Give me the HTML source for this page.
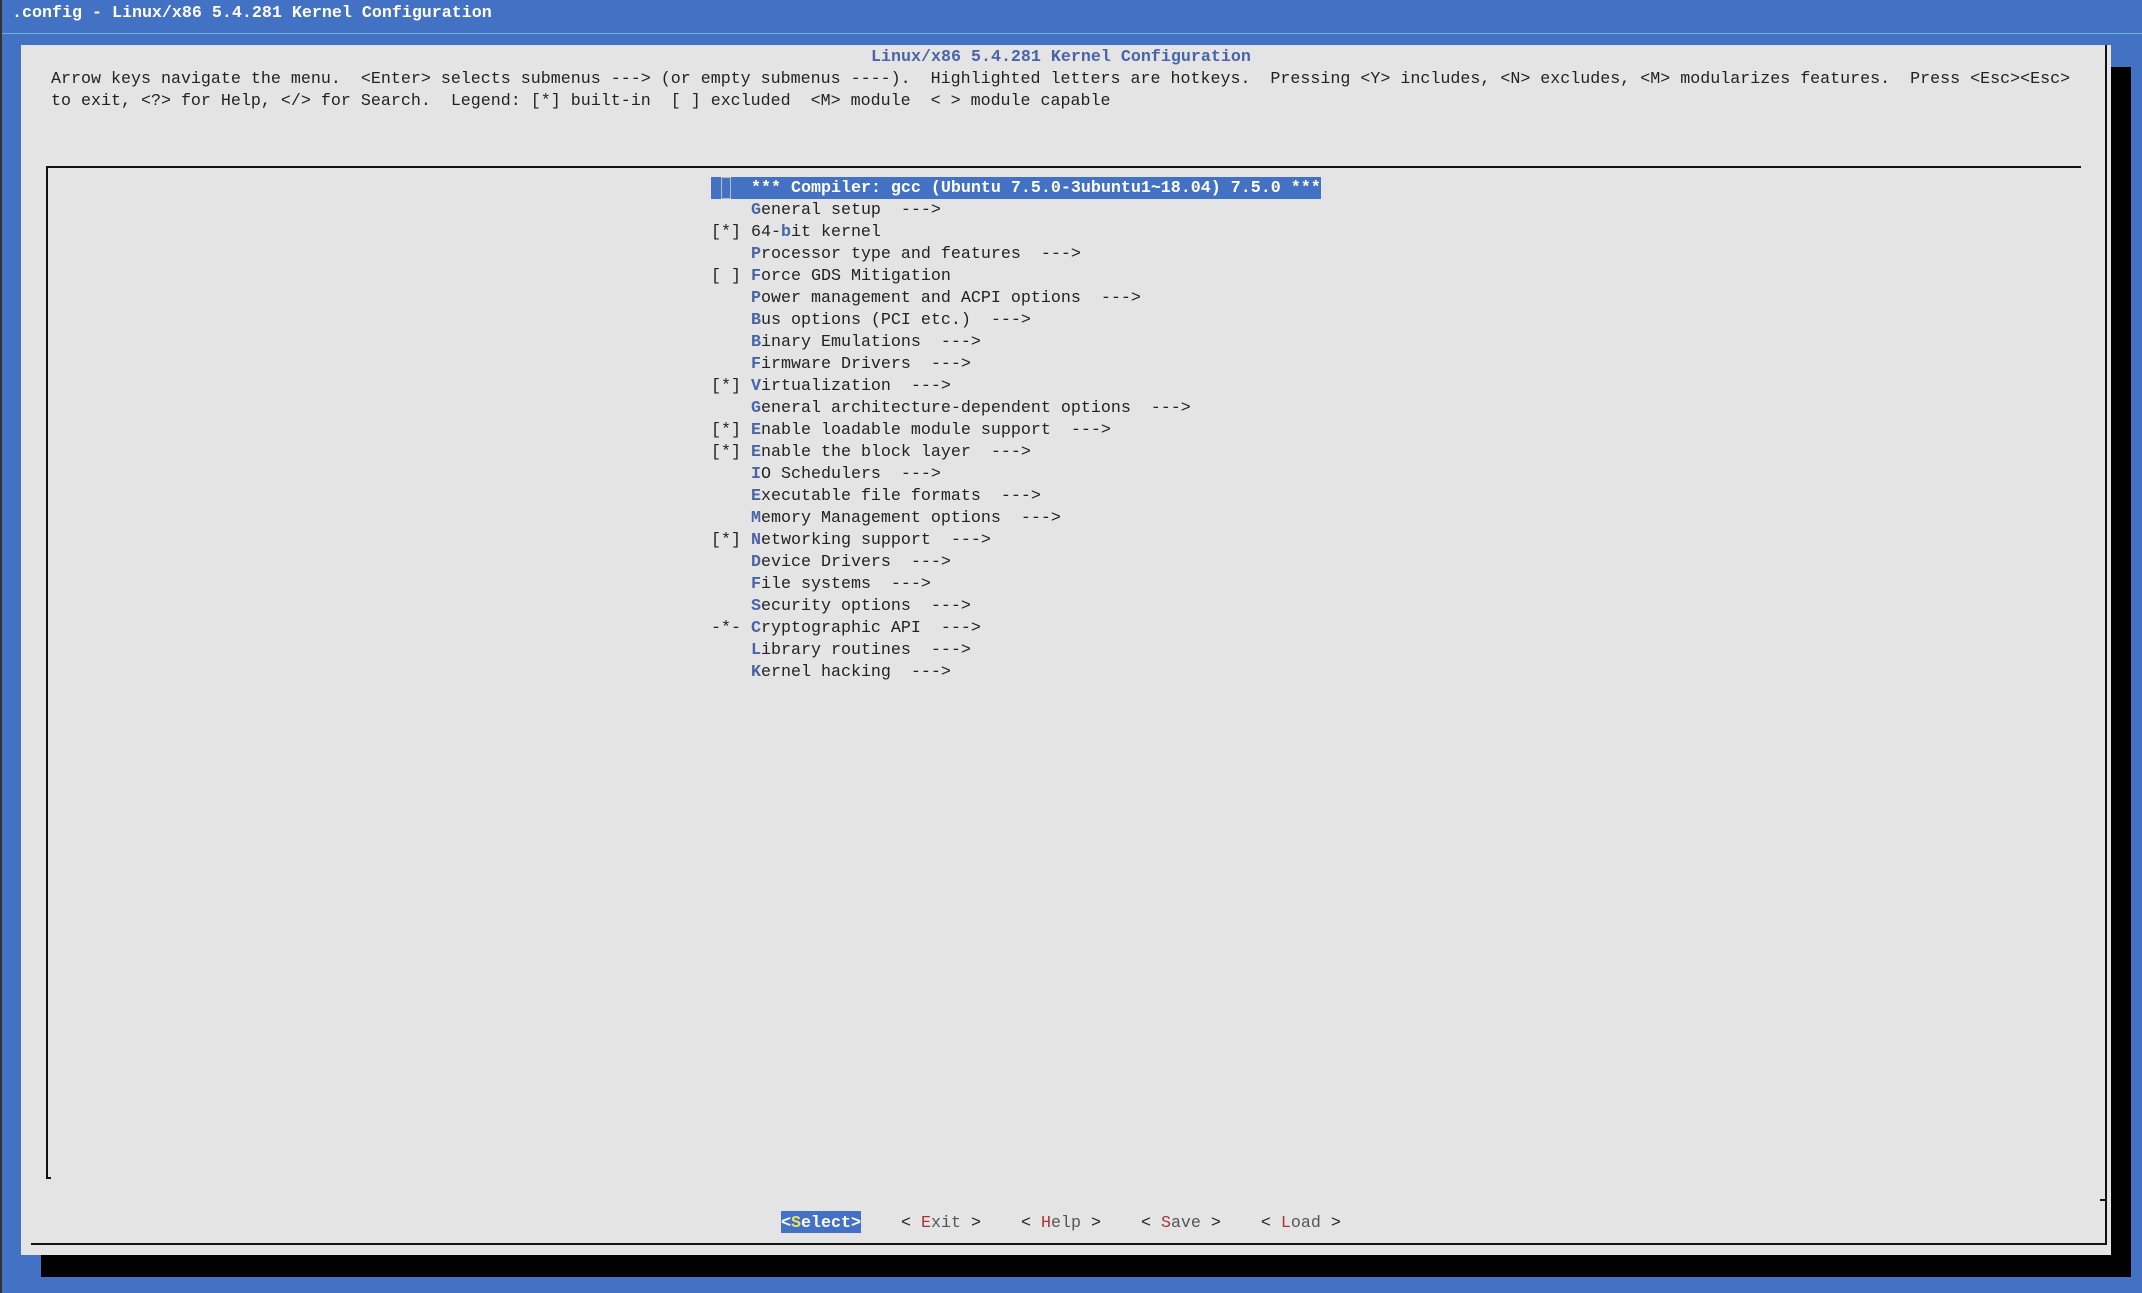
<!DOCTYPE html>
<html><head><meta charset="utf-8"><style>
*{margin:0;padding:0;box-sizing:border-box}
body{width:2142px;height:1293px;background:#4371c4;position:relative;overflow:hidden;font-family:"Liberation Mono",monospace;font-size:16.67px;line-height:22px;color:#222}
.abs{position:absolute;white-space:pre}
.k{color:#4a64a8;font-weight:bold}
.b{font-weight:bold}
</style></head><body>
<div class="abs" style="left:0;top:0;width:2px;height:1293px;background:#333"></div>
<div class="abs b" style="left:12px;top:3px;color:#fff">.config - Linux/x86 5.4.281 Kernel Configuration</div>
<div class="abs" style="left:2px;top:33px;width:2140px;height:1px;background:#6fb7d9"></div>
<div class="abs" style="left:41px;top:67px;width:2090px;height:1210px;background:#000"></div>
<div class="abs" style="left:21px;top:45px;width:2090px;height:1210px;background:#e4e4e4"></div>
<div class="abs b" style="left:871px;top:47px;color:#4a64a8">Linux/x86 5.4.281 Kernel Configuration</div>
<div class="abs" style="left:51px;top:69px">Arrow keys navigate the menu.  &lt;Enter&gt; selects submenus ---&gt; (or empty submenus ----).  Highlighted letters are hotkeys.  Pressing &lt;Y&gt; includes, &lt;N&gt; excludes, &lt;M&gt; modularizes features.  Press &lt;Esc&gt;&lt;Esc&gt;
to exit, &lt;?&gt; for Help, &lt;/&gt; for Search.  Legend: [*] built-in  [ ] excluded  &lt;M&gt; module  &lt; &gt; module capable</div>
<div class="abs" style="left:46px;top:166px;width:2035px;height:2px;background:#111"></div>
<div class="abs" style="left:46px;top:166px;width:2px;height:1013px;background:#111"></div>
<div class="abs" style="left:46px;top:1177px;width:5px;height:2px;background:#111"></div>
<div class="abs" style="left:2105px;top:45px;width:2px;height:1200px;background:#111"></div>
<div class="abs" style="left:2100px;top:1199px;width:6px;height:2px;background:#111"></div>
<div class="abs" style="left:31px;top:1243px;width:2076px;height:2px;background:#111"></div>
<div class="abs" style="left:711px;top:177px;width:610px;height:22px;background:#4371c4"></div>
<div class="abs" style="left:721px;top:177px;width:10px;height:22px;border:1px solid #bbb"></div>
<div class="abs b" style="left:751px;top:178px;color:#fff">*** Compiler: gcc (Ubuntu 7.5.0-3ubuntu1~18.04) 7.5.0 ***</div>
<div class="abs" style="left:711px;top:200px">    <span class="k">G</span>eneral setup  ---&gt;
[*] 64-<span class="k">b</span>it kernel
    <span class="k">P</span>rocessor type and features  ---&gt;
[ ] <span class="k">F</span>orce GDS Mitigation
    <span class="k">P</span>ower management and ACPI options  ---&gt;
    <span class="k">B</span>us options (PCI etc.)  ---&gt;
    <span class="k">B</span>inary Emulations  ---&gt;
    <span class="k">F</span>irmware Drivers  ---&gt;
[*] <span class="k">V</span>irtualization  ---&gt;
    <span class="k">G</span>eneral architecture-dependent options  ---&gt;
[*] <span class="k">E</span>nable loadable module support  ---&gt;
[*] <span class="k">E</span>nable the block layer  ---&gt;
    <span class="k">I</span>O Schedulers  ---&gt;
    <span class="k">E</span>xecutable file formats  ---&gt;
    <span class="k">M</span>emory Management options  ---&gt;
[*] <span class="k">N</span>etworking support  ---&gt;
    <span class="k">D</span>evice Drivers  ---&gt;
    <span class="k">F</span>ile systems  ---&gt;
    <span class="k">S</span>ecurity options  ---&gt;
-*- <span class="k">C</span>ryptographic API  ---&gt;
    <span class="k">L</span>ibrary routines  ---&gt;
    <span class="k">K</span>ernel hacking  ---&gt;</div>
<div class="abs b" style="left:781px;top:1211px;width:80px;height:22px;background:#4371c4;color:#fff;padding-top:2px">&lt;<span style="color:#f0e060">S</span>elect&gt;</div>
<div class="abs" style="left:901px;top:1213px">&lt; <span style="color:#a33">E</span><span style="color:#555">xit</span> &gt;    &lt; <span style="color:#a33">H</span><span style="color:#555">elp</span> &gt;    &lt; <span style="color:#a33">S</span><span style="color:#555">ave</span> &gt;    &lt; <span style="color:#a33">L</span><span style="color:#555">oad</span> &gt;</div>
</body></html>
